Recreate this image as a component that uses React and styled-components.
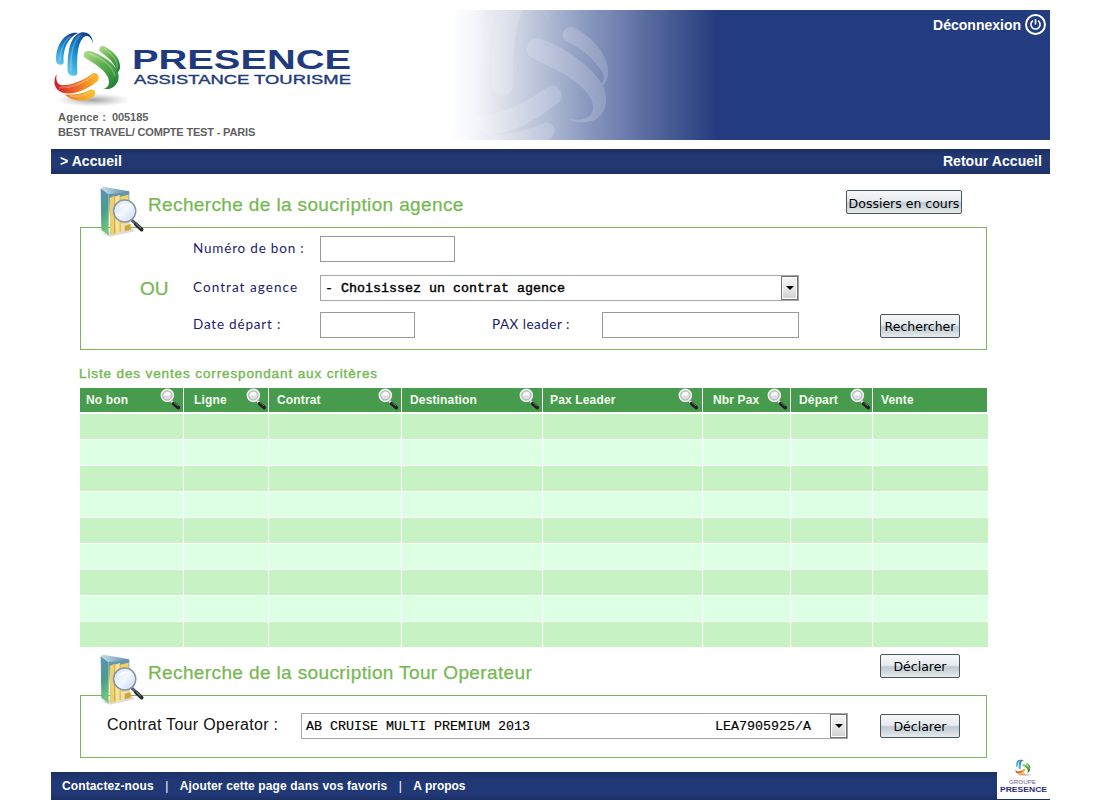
import React from "react";
import styled, { createGlobalStyle } from "styled-components";

const Global = createGlobalStyle`
  * { box-sizing: border-box; }
  body { margin: 0; background: #fff; font-family: "Liberation Sans", Arial, sans-serif; }
`;

const Page = styled.div`
  width: 999px;
  height: 800px;
  margin-left: 51px;
  padding-top: 10px;
  display: flex;
  flex-direction: column;
  overflow: hidden;
`;

const Header = styled.header`
  position: relative;
  height: 130px;
  flex: none;
  display: flex;
  justify-content: space-between;
  background: linear-gradient(
    90deg,
    #fff 399px,
    #f3f5fa 425px,
    #dcdfea 452px,
    #b7c1d8 489px,
    #8796bd 539px,
    #6b7bac 575px,
    #5a6b9f 595px,
    #40558e 629px,
    #233c7f 666px
  );
`;

const Watermark = styled.svg`
  position: absolute;
  left: 389px;
  top: 0;
  width: 200px;
  height: 130px;
`;

const Brand = styled.div`
  position: relative;
  display: flex;
  flex-direction: column;
  padding-top: 15px;
  color: #5f5f5f;
  font-size: 11px;
  font-weight: bold;
`;

const BrandLogo = styled.svg`
  display: block;
  width: 310px;
  height: 85px;
`;

const AgencyLine = styled.div`
  padding-left: 7px;
  height: 15px;
  line-height: 15px;
  white-space: pre;
  letter-spacing: ${(p) => p.$spacing || "0"};
`;

const Code = styled.span`
  letter-spacing: -0.1px;
  margin-left: 6px;
`;

const Logout = styled.a`
  position: relative;
  display: flex;
  align-items: center;
  height: 21px;
  margin: 4px 4px 0 0;
  gap: 4px;
  color: #fff;
  font-size: 14px;
  font-weight: bold;
`;

const NavBar = styled.nav`
  flex: none;
  height: 25px;
  margin-top: 9px;
  padding: 0 8px 2px 9px;
  display: flex;
  justify-content: space-between;
  align-items: center;
  color: #fff;
  font-size: 14px;
  font-weight: bold;
  letter-spacing: 0.06px;
  background: linear-gradient(#1b3063, #213872 30%, #213872 75%, #1b3063);
`;

const Main = styled.main`
  flex: none;
  width: 908px;
  margin-left: 29px;
  display: flex;
  flex-direction: column;
`;

const TitleRow = styled.div`
  position: relative;
  display: flex;
  justify-content: space-between;
  align-items: flex-start;
  height: ${(p) => p.$height}px;
  padding: ${(p) => p.$pad};
`;

const TitleIcon = styled.svg`
  position: absolute;
  left: 12px;
  bottom: -13px;
  width: 60px;
  height: 60px;
`;

const Title = styled.h2`
  margin: ${(p) => p.$top}px 0 0;
  font-size: 19px;
  line-height: 24px;
  font-weight: normal;
  letter-spacing: ${(p) => p.$spacing};
  color: #76b852;
  -webkit-text-stroke: 0.25px #76b852;
`;

const Panel = styled.section`
  width: 907px;
  height: ${(p) => p.$height}px;
  padding: ${(p) => p.$pad};
  border: 1px solid #78b856;
`;

const FormRow = styled.div`
  display: flex;
  height: 26px;
  margin-bottom: ${(p) => p.$gap || 0}px;
`;

const Or = styled.div`
  width: 53px;
  line-height: 27px;
  font-size: 19px;
  color: #76b852;
  -webkit-text-stroke: 0.3px #76b852;
`;

const Label = styled.label`
  width: ${(p) => p.$width}px;
  margin-left: ${(p) => p.$left || 0}px;
  line-height: 24px;
  font-family: Lato, sans-serif;
  font-size: 13.5px;
  letter-spacing: ${(p) => p.$spacing};
  color: #1c1c6c;
  white-space: nowrap;
`;

const Input = styled.input`
  width: ${(p) => p.$width}px;
  height: 26px;
  padding: 0 4px;
  border: 1px solid #999;
  background: #fff;
`;

const Select = styled.div`
  width: ${(p) => p.$width}px;
  height: 26px;
  display: flex;
  align-items: center;
  border: 1px solid #a5a5aa;
  padding-left: ${(p) => p.$pad}px;
  font: 400 13.33px "Liberation Mono", monospace;
  -webkit-text-stroke: ${(p) => p.$stroke || 0}px #000;
  color: #000;
  white-space: pre;
`;

const SelectArrow = styled.span`
  margin-left: auto;
  width: 17px;
  height: 24px;
  display: flex;
  align-items: center;
  justify-content: center;
  border: 1px solid #707070;
  box-shadow: inset 0 0 0 1px #fff;
  background: linear-gradient(#f4f4f4, #e8e8e8 50%, #d0d0d0);
`;

const Triangle = styled.i`
  border: 4px solid transparent;
  border-top-color: #000;
  border-bottom: 0;
`;

const Button = styled.button`
  width: ${(p) => p.$width || 80}px;
  height: 24px;
  margin: ${(p) => p.$margin || "0"};
  padding: ${(p) => p.$drop || 2}px 0 0;
  border: 1px solid #48565e;
  border-radius: 2px;
  background: linear-gradient(#f5f8f9, #e6ebee 46%, #c0cad2 54%, #d0d8dd 75%, #e6eaec);
  font: 12.5px/18px "DejaVu Sans", sans-serif;
  white-space: nowrap;
  color: #000;
`;

const Caption = styled.h3`
  margin: 15px 0 0 -1px;
  height: 23px;
  line-height: 17px;
  font-size: 13.5px;
  font-weight: normal;
  letter-spacing: 0.88px;
  color: #76b852;
  -webkit-text-stroke: 0.4px #76b852;
`;

const columnTracks = "103px 84px 132px 140px 159px 87px 81px 115px";

const TableHead = styled.div`
  display: grid;
  grid-template-columns: ${columnTracks};
  gap: 1px;
  height: 24px;
  margin-bottom: 2px;
`;

const HeadCell = styled.div`
  display: flex;
  align-items: center;
  justify-content: space-between;
  padding-left: ${(p) => p.$pad}px;
  padding-right: ${(p) => p.$end || 0}px;
  margin-right: ${(p) => (p.$last ? 1 : 0)}px;
  background: #479b4c;
  color: #f4fff2;
  font-size: 12px;
  font-weight: bold;
  letter-spacing: 0.15px;
  white-space: nowrap;
`;

const TableBody = styled.div`
  display: grid;
  grid-template-columns: ${columnTracks};
  grid-auto-rows: 25px;
  gap: 1px;
`;

const Cell = styled.div`
  background: ${(p) => (p.$even ? "#ddffe4" : "#c7f2c4")};
`;

const OperatorLabel = styled.label`
  width: 194px;
  font-size: 16px;
  line-height: 23px;
  letter-spacing: 0.31px;
  color: #111;
`;

const PolicyCode = styled.span`
  margin-left: auto;
  margin-right: 19px;
  & + ${SelectArrow} { margin-left: 0; }
`;

const Footer = styled.footer`
  flex: none;
  display: flex;
  align-items: flex-end;
  height: 43px;
  margin-top: -1px;
`;

const FooterBar = styled.div`
  width: 946px;
  height: 28px;
  padding-left: 11px;
  display: flex;
  align-items: center;
  color: #fff;
  font-size: 12px;
  font-weight: bold;
  background: linear-gradient(#1b3063, #213876 30%, #213876 80%, #1b3063);
`;

const FooterLink = styled.a`
  letter-spacing: ${(p) => p.$spacing};
`;

const Divider = styled.span`
  width: 26px;
  text-align: center;
  font-weight: normal;
`;

const GroupLogo = styled.svg`
  width: 53px;
  height: 43px;
  border-bottom: 1px solid #1d3467;
`;

function Emblem({ id }) {
  const url = (n) => `url(#${id}${n})`;
  return (
    <g>
      <defs>
        <linearGradient id={id + "b"} x1="0.7" y1="0" x2="0.2" y2="1">
          <stop offset="0" stopColor="#15408e" />
          <stop offset="0.45" stopColor="#1180c6" />
          <stop offset="1" stopColor="#5cc5ef" />
        </linearGradient>
        <linearGradient id={id + "g"} x1="0" y1="0" x2="0.8" y2="1">
          <stop offset="0" stopColor="#b5dd91" />
          <stop offset="0.5" stopColor="#5cae49" />
          <stop offset="1" stopColor="#1e8139" />
        </linearGradient>
        <linearGradient id={id + "o"} x1="0" y1="0" x2="1" y2="0">
          <stop offset="0" stopColor="#d3192a" />
          <stop offset="0.45" stopColor="#ea6427" />
          <stop offset="1" stopColor="#fdbd24" />
        </linearGradient>
        <linearGradient id={id + "y"} x1="0" y1="0" x2="1" y2="0">
          <stop offset="0" stopColor="#ee7a25" />
          <stop offset="1" stopColor="#fdc02c" />
        </linearGradient>
        <radialGradient id={id + "s"}>
          <stop offset="0" stopColor="#666" stopOpacity="0.6" />
          <stop offset="1" stopColor="#888" stopOpacity="0" />
        </radialGradient>
      </defs>
      <ellipse cx="145" cy="225" rx="112" ry="20" fill={url("s")} />
      <path d="M99 24C66 19 32 52 33 108C35 120 51 123 56 114C53 74 66 40 99 24Z" fill={url("b")} />
      <path d="M144 56C143 28 124 18 106 23C78 34 67 70 68 138C70 154 92 157 97 146C95 98 97 57 114 38C126 27 138 33 144 56Z" fill={url("b")} />
      <path d="M165 80C158 69 169 58 182 66C211 83 228 106 225 130C223 137 220 142 216 143C214 117 187 95 165 80Z" fill={url("g")} />
      <path d="M118 97C111 84 122 74 138 79C184 95 222 128 221 155C221 181 194 199 174 190C190 190 197 174 188 155C174 128 140 113 118 97Z" fill={url("g")} />
      <path d="M35 147C23 166 26 195 53 203C87 212 129 192 159 167C166 155 157 142 145 144C118 165 81 181 52 181C38 179 31 168 35 147Z" fill={url("o")} />
      <path d="M59 208C85 211 116 205 136 194C150 190 156 206 145 215C119 233 79 230 59 208Z" fill={url("y")} />
      <g fill="none" stroke="#fff" strokeOpacity="0.25" strokeWidth="5">
        <path d="M45 107C45 75 58 46 78 34" />
        <path d="M77 138C76 95 80 53 107 29" />
        <path d="M132 86C166 97 203 121 209 153" />
        <path d="M177 70C201 85 217 107 217 128" />
        <path d="M149 150C118 173 78 189 43 188" />
        <path d="M140 200C119 213 91 217 74 212" />
      </g>
    </g>
  );
}

function FolderIcon({ id }) {
  return (
    <TitleIcon viewBox="0 0 180 180">
      <defs>
        <linearGradient id={id + "f"} x1="0" y1="0" x2="0.2" y2="1">
          <stop offset="0" stopColor="#5c93b8" />
          <stop offset="0.55" stopColor="#4f9a8c" />
          <stop offset="1" stopColor="#74c779" />
        </linearGradient>
        <linearGradient id={id + "t"} x1="0" y1="0" x2="1" y2="0">
          <stop offset="0" stopColor="#c7dfe8" />
          <stop offset="1" stopColor="#568daf" />
        </linearGradient>
        <linearGradient id={id + "l"} x1="0" y1="0" x2="1" y2="1">
          <stop offset="0" stopColor="#c5dcf9" />
          <stop offset="0.5" stopColor="#f5f9ff" />
          <stop offset="1" stopColor="#bcd2f4" />
        </linearGradient>
      </defs>
      <path d="M30 160L52 170L128 154L118 142Z" fill="#999" opacity="0.35" />
      <path d="M26 24L50 43V166L28 150Z" fill={`url(#${id}f)`} />
      <path d="M26 24L34 20L111 34V50L50 43Z" fill={`url(#${id}t)`} />
      <path d="M50 42L112 36V148L56 162Z" fill="#6796a8" />
      <path d="M53 54L68 47V162L55 165Z" fill="#efd06a" />
      <path d="M68 50L84 45V158L70 162Z" fill="#f8e391" />
      <path d="M84 50L110 44V150L84 156Z" fill="#f2d26a" />
      <path d="M68 49V161M84 47V156" stroke="#c7a548" strokeWidth="2" />
      <path d="M88 132L114 128V150L88 157Z" fill="#e8e1be" />
      <path d="M98 137L116 132V149L98 154Z" fill="#d4a72f" />
      <path d="M117 118L150 149" stroke="#555e69" strokeWidth="9" />
      <path d="M132 133L149 149" stroke="#25282d" strokeWidth="11" strokeLinecap="round" />
      <path d="M131 130L147 145" stroke="#b0b5bb" strokeWidth="2.5" />
      <circle cx="98" cy="93" r="33" fill={`url(#${id}l)`} stroke="#8796a7" strokeWidth="5" />
      <circle cx="98" cy="93" r="29" fill="none" stroke="#e7effa" strokeWidth="2.5" />
      <path d="M77 87C82 71 97 66 111 74C99 75 91 82 77 87Z" fill="#fff" opacity="0.8" />
    </TitleIcon>
  );
}

function Magnifier() {
  return (
    <svg width="22" height="24" viewBox="0 0 66 72">
      <path d="M36 38L48 50" stroke="#dddddd" strokeWidth="7" />
      <path d="M44 47L58 59" stroke="#202020" strokeWidth="11" strokeLinecap="round" />
      <path d="M45 44L57 54" stroke="#8a8a8a" strokeWidth="2.5" />
      <circle cx="25" cy="23" r="20.5" fill="#4e5b51" opacity="0.6" />
      <circle cx="25" cy="22" r="18" fill="#b9c1bd" stroke="#f2f2f2" strokeWidth="5" />
      <circle cx="25" cy="22" r="13.5" fill="#dce0e4" stroke="#a8adab" strokeWidth="2" />
      <path d="M14 23C15 14 23 10 32 13L35 22Z" fill="#fafafa" />
    </svg>
  );
}

function PowerIcon() {
  return (
    <svg width="21" height="21" viewBox="0 0 21 21" fill="none" stroke="#fff">
      <circle cx="10.5" cy="10.5" r="9.5" strokeWidth="2" />
      <path d="M8 6.6A4.6 4.6 0 1 0 13 6.6" strokeWidth="1.6" />
      <path d="M10.5 5V10.5" strokeWidth="1.6" />
    </svg>
  );
}

const columns = [
  { name: "No bon", pad: 6, end: 2 },
  { name: "Ligne", pad: 10, end: 1 },
  { name: "Contrat", pad: 8, end: 2 },
  { name: "Destination", pad: 8, end: 2 },
  { name: "Pax Leader", pad: 7, end: 3 },
  { name: "Nbr Pax", pad: 10, end: 2 },
  { name: "Départ", pad: 8, end: 1 },
  { name: "Vente", pad: 8, last: true },
];
const rows = Array.from({ length: 9 }, (_, i) => i);

function Arrow() {
  return (
    <SelectArrow>
      <Triangle />
    </SelectArrow>
  );
}

export default function App() {
  return (
    <Page>
      <Global />
      <Header>
        <Watermark viewBox="0 30 600 390" fill="#fff">
          <g opacity="0.17">
            <path d="M158 30C142 70 130 130 134 185L157 195C157 135 164 75 186 30Z" opacity="0.6" />
            <path d="M186 30C160 75 153 170 157 252C160 292 214 295 221 255C216 170 223 80 249 30Z" />
            <path d="M310 30C320 38 326 52 327 66C323 52 318 40 310 30Z" />
            <path d="M373 121C359 101 375 75 401 82C461 113 509 171 504 222C500 248 492 257 485 258L481 251C494 247 495 231 483 211C455 169 415 140 373 121Z" />
            <path d="M265 166C253 140 269 112 300 116C367 135 463 204 492 262C506 303 496 345 464 361C435 371 401 367 385 357C425 364 456 354 459 326C463 289 419 251 376 224C340 204 298 188 265 166Z" />
            <path d="M100 348C174 350 251 311 320 263C346 244 376 274 362 302C306 348 211 409 140 404C119 395 105 375 100 348Z" />
            <path d="M148 405C204 404 263 392 311 369C337 362 354 386 339 409L324 420H156Z" />
          </g>
        </Watermark>
        <Brand>
          <BrandLogo viewBox="0 0 310 85">
            <g transform="translate(-6 0) scale(0.33333)">
              <Emblem id="main" />
            </g>
            <g fill="#213a7d" fontFamily="Liberation Sans, sans-serif">
              <text x="81" y="44" fontSize="27.5" fontWeight="700" textLength="219" lengthAdjust="spacingAndGlyphs">PRESENCE</text>
              <text x="83" y="59" fontSize="12.5" fontWeight="400" textLength="217" lengthAdjust="spacingAndGlyphs" stroke="#213a7d" strokeWidth="0.35">ASSISTANCE TOURISME</text>
            </g>
          </BrandLogo>
          <AgencyLine $spacing="0.2px">
            Agence :<Code>005185</Code>
          </AgencyLine>
          <AgencyLine $spacing="-0.17px">BEST TRAVEL/ COMPTE TEST - PARIS</AgencyLine>
        </Brand>
        <Logout>
          Déconnexion
          <PowerIcon />
        </Logout>
      </Header>
      <NavBar>
        <span>&gt; Accueil</span>
        <span>Retour Accueil</span>
      </NavBar>
      <Main>
        <TitleRow $height={53} $pad="16px 26px 0 68px">
          <FolderIcon id="agency" />
          <Title $top={3} $spacing="0.37px">Recherche de la soucription agence</Title>
          <Button $width={116} $drop={3}>Dossiers en cours</Button>
        </TitleRow>
        <Panel $height={123} $pad="8px 0 0 59px">
          <FormRow $gap={13}>
            <Label $left={53} $width={127} $spacing="0.8px">Numéro de bon :</Label>
            <Input $width={135} />
          </FormRow>
          <FormRow $gap={11}>
            <Or>OU</Or>
            <Label $width={127} $spacing="1.06px">Contrat agence</Label>
            <Select $width={479} $pad={4} $stroke={0.4}>
              - Choisissez un contrat agence
              <Arrow />
            </Select>
          </FormRow>
          <FormRow>
            <Label $left={53} $width={127} $spacing="0.8px">Date départ :</Label>
            <Input $width={95} />
            <Label $left={77} $width={110} $spacing="0.5px">PAX leader :</Label>
            <Input $width={197} />
            <Button $margin="2px 0 0 81px">Rechercher</Button>
          </FormRow>
        </Panel>
        <Caption>Liste des ventes correspondant aux critères</Caption>
        <TableHead>
          {columns.map((c) => (
            <HeadCell key={c.name} $pad={c.pad} $end={c.end} $last={c.last}>
              {c.name}
              {!c.last && <Magnifier />}
            </HeadCell>
          ))}
        </TableHead>
        <TableBody>
          {rows.map((r) => columns.map((c) => <Cell key={c.name + r} $even={r % 2 === 1} />))}
        </TableBody>
        <TitleRow $height={48} $pad="7px 28px 0 68px">
          <FolderIcon id="operator" />
          <Title $top={7} $spacing="0.38px">Recherche de la soucription Tour Operateur</Title>
          <Button>Déclarer</Button>
        </TitleRow>
        <Panel $height={63} $pad="17px 0 0 26px">
          <FormRow>
            <OperatorLabel>Contrat Tour Operator :</OperatorLabel>
            <Select $width={547} $pad={4} $stroke={0.15}>
              AB CRUISE MULTI PREMIUM 2013
              <PolicyCode>LEA7905925/A</PolicyCode>
              <Arrow />
            </Select>
            <Button $margin="1px 0 0 32px">Déclarer</Button>
          </FormRow>
        </Panel>
      </Main>
      <Footer>
        <FooterBar>
          <FooterLink $spacing="0.12px">Contactez-nous</FooterLink>
          <Divider>|</Divider>
          <FooterLink $spacing="0.14px">Ajouter cette page dans vos favoris</FooterLink>
          <Divider>|</Divider>
          <FooterLink $spacing="0">A propos</FooterLink>
        </FooterBar>
        <GroupLogo viewBox="0 0 53 42">
          <rect width="53" height="42" fill="#fff" />
          <g transform="translate(16.5 1) scale(0.075)">
            <Emblem id="group" />
          </g>
          <g fontFamily="Liberation Sans, sans-serif">
            <text x="12" y="27" fontSize="5" fill="#6b6488" textLength="27" lengthAdjust="spacingAndGlyphs">GROUPE</text>
            <text x="3" y="35" fontSize="7" fontWeight="700" fill="#2b2c7c" textLength="47" lengthAdjust="spacingAndGlyphs">PRESENCE</text>
          </g>
        </GroupLogo>
      </Footer>
    </Page>
  );
}
